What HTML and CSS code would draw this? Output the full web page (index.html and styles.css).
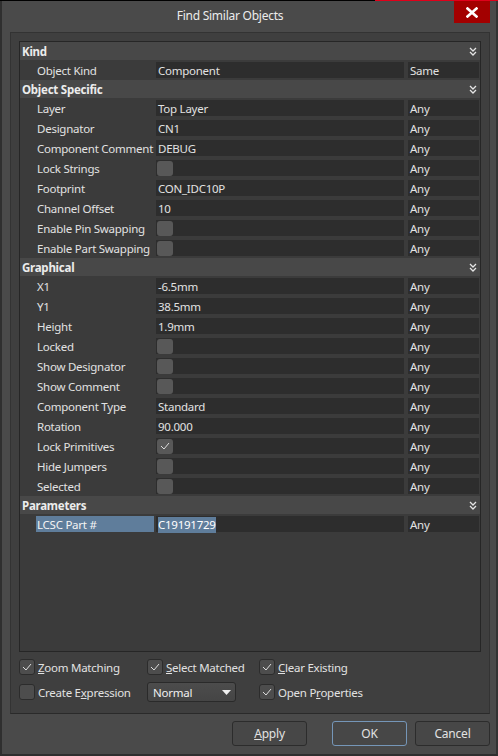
FILE: index.html
```html
<!DOCTYPE html>
<html lang="en">
<head>
    <meta charset="UTF-8">
    <title>Find Similar Objects</title>
    <link rel="stylesheet" href="styles.css">
</head>
<body>
    <div class="topline"></div>
    <div class="window">
        <div class="titlebar">
            <div class="title">Find Similar Objects</div>
            <div class="close">
                <svg width="12" height="11" viewBox="0 0 12 11"><path d="M1.5 1.5 L10.5 9.5 M10.5 1.5 L1.5 9.5" stroke="#fff" stroke-width="2.6" stroke-linecap="square"/></svg>
            </div>
        </div>

        <div class="panel">
            <div class="grid">
                <div class="group">
                    <span>Kind</span>
                    <svg class="chev" width="8" height="9" viewBox="0 0 8 9"><path d="M1 1 L4 4 L7 1 M1 5 L4 8 L7 5" stroke="#e6e6e6" stroke-width="1.3" fill="none"/></svg>
                </div>
                <div class="row"><div class="label">Object Kind</div><div class="value">Component</div><div class="mode">Same</div></div>

                <div class="group">
                    <span>Object Specific</span>
                    <svg class="chev" width="8" height="9" viewBox="0 0 8 9"><path d="M1 1 L4 4 L7 1 M1 5 L4 8 L7 5" stroke="#e6e6e6" stroke-width="1.3" fill="none"/></svg>
                </div>
                <div class="row"><div class="label">Layer</div><div class="value">Top Layer</div><div class="mode">Any</div></div>
                <div class="row"><div class="label">Designator</div><div class="value">CN1</div><div class="mode">Any</div></div>
                <div class="row"><div class="label">Component Comment</div><div class="value">DEBUG</div><div class="mode">Any</div></div>
                <div class="row"><div class="label">Lock Strings</div><div class="value"><span class="box"></span></div><div class="mode">Any</div></div>
                <div class="row"><div class="label">Footprint</div><div class="value">CON_IDC10P</div><div class="mode">Any</div></div>
                <div class="row"><div class="label">Channel Offset</div><div class="value">10</div><div class="mode">Any</div></div>
                <div class="row"><div class="label">Enable Pin Swapping</div><div class="value"><span class="box"></span></div><div class="mode">Any</div></div>
                <div class="row"><div class="label">Enable Part Swapping</div><div class="value"><span class="box"></span></div><div class="mode">Any</div></div>

                <div class="group">
                    <span>Graphical</span>
                    <svg class="chev" width="8" height="9" viewBox="0 0 8 9"><path d="M1 1 L4 4 L7 1 M1 5 L4 8 L7 5" stroke="#e6e6e6" stroke-width="1.3" fill="none"/></svg>
                </div>
                <div class="row"><div class="label">X1</div><div class="value">-6.5mm</div><div class="mode">Any</div></div>
                <div class="row"><div class="label">Y1</div><div class="value">38.5mm</div><div class="mode">Any</div></div>
                <div class="row"><div class="label">Height</div><div class="value">1.9mm</div><div class="mode">Any</div></div>
                <div class="row"><div class="label">Locked</div><div class="value"><span class="box"></span></div><div class="mode">Any</div></div>
                <div class="row"><div class="label">Show Designator</div><div class="value"><span class="box"></span></div><div class="mode">Any</div></div>
                <div class="row"><div class="label">Show Comment</div><div class="value"><span class="box"></span></div><div class="mode">Any</div></div>
                <div class="row"><div class="label">Component Type</div><div class="value">Standard</div><div class="mode">Any</div></div>
                <div class="row"><div class="label">Rotation</div><div class="value">90.000</div><div class="mode">Any</div></div>
                <div class="row"><div class="label">Lock Primitives</div><div class="value"><span class="box"><svg width="10" height="8" viewBox="0 0 10 8"><path d="M1 4 L4 7 L9 1" stroke="#dcdcdc" stroke-width="1" fill="none"/></svg></span></div><div class="mode">Any</div></div>
                <div class="row"><div class="label">Hide Jumpers</div><div class="value"><span class="box"></span></div><div class="mode">Any</div></div>
                <div class="row"><div class="label">Selected</div><div class="value"><span class="box"></span></div><div class="mode">Any</div></div>

                <div class="group">
                    <span>Parameters</span>
                    <svg class="chev" width="8" height="9" viewBox="0 0 8 9"><path d="M1 1 L4 4 L7 1 M1 5 L4 8 L7 5" stroke="#e6e6e6" stroke-width="1.3" fill="none"/></svg>
                </div>
                <div class="row">
                    <div class="label"><span class="picked">LCSC Part #</span></div>
                    <div class="value"><span class="sel">C19191729</span></div>
                    <div class="mode">Any</div>
                </div>
            </div>

            <div class="options">
                <div class="optrow">
                    <label class="opt w1"><span class="cb"><svg width="10" height="8" viewBox="0 0 10 8"><path d="M1 4 L4 7 L9 1" stroke="#dcdcdc" stroke-width="1" fill="none"/></svg></span><span><u>Z</u>oom Matching</span></label>
                    <label class="opt w2"><span class="cb"><svg width="10" height="8" viewBox="0 0 10 8"><path d="M1 4 L4 7 L9 1" stroke="#dcdcdc" stroke-width="1" fill="none"/></svg></span><span><u>S</u>elect Matched</span></label>
                    <label class="opt"><span class="cb"><svg width="10" height="8" viewBox="0 0 10 8"><path d="M1 4 L4 7 L9 1" stroke="#dcdcdc" stroke-width="1" fill="none"/></svg></span><span><u>C</u>lear Existing</span></label>
                </div>
                <div class="optrow">
                    <label class="opt w1"><span class="cb"></span><span>Create E<u>x</u>pression</span></label>
                    <div class="w2">
                        <div class="combo">
                            <span>Normal</span>
                            <svg width="9" height="5" viewBox="0 0 9 5"><path d="M0 0 L9 0 L4.5 5 Z" fill="#f0f0f0"/></svg>
                        </div>
                    </div>
                    <label class="opt"><span class="cb"><svg width="10" height="8" viewBox="0 0 10 8"><path d="M1 4 L4 7 L9 1" stroke="#dcdcdc" stroke-width="1" fill="none"/></svg></span><span>Open P<u>r</u>operties</span></label>
                </div>
            </div>
        </div>

        <div class="buttons">
            <button><u>A</u>pply</button>
            <button class="default">OK</button>
            <button>Cancel</button>
        </div>
    </div>
</body>
</html>
```

FILE: styles.css
```css
body {
    margin: 0;
    background-color: #000;
    font-family: "Noto Sans", "Open Sans", sans-serif;
    font-size: 11.5px;
    letter-spacing: -0.25px;
    color: #e2e2e2;
}
.topline {
    height: 1px;
    background:
        linear-gradient(to right, transparent 375px, #e0001a 375px),
        #000;
}
.window {
    width: 498px;
    height: 755px;
    box-sizing: border-box;
    background-color: #4a4a4a;
    border-left: 2px solid #2f2f2f;
    border-right: 2px solid #333;
    border-bottom: 2px solid #2f2f2f;
}
.titlebar {
    display: flex;
    height: 31px;
}
.title {
    flex: 1;
    text-align: center;
    line-height: 30px;
    padding-left: 4px;
    font-size: 12px;
    color: #ececec;
}
.close {
    width: 36px;
    height: 22px;
    margin-right: 6px;
    background-color: #a30000;
    display: flex;
    align-items: center;
    justify-content: center;
}
.panel {
    margin: 0 6px 0 8px;
    height: 682px;
    box-sizing: border-box;
    background-color: #3f3f3f;
    border: 1px solid #333;
    border-bottom-color: #2a2a2a;
    padding: 8px 8px 0 8px;
}
.grid {
    height: 611px;
    box-sizing: border-box;
    border: 1px solid #262626;
    background-color: #3b3b3b;
}
.group {
    display: flex;
    align-items: center;
    justify-content: space-between;
    height: 18px;
    padding: 0 3px 0 2px;
    background-color: #484848;
    font-weight: bold;
    color: #ececec;
}
.chev {
    margin-top: 1px;
}
.row {
    display: flex;
    height: 20px;
    align-items: center;
}
.label,
.value,
.mode {
    height: 16px;
    line-height: 16px;
    box-sizing: border-box;
    padding-top: 1px;
}
.label {
    width: 136px;
    padding-left: 17px;
    white-space: nowrap;
}
.picked {
    display: block;
    width: 118px;
    height: 16px;
    margin: -1px 0 0 -1px;
    box-sizing: border-box;
    padding: 1px 0 0 1px;
    background-color: #5f7d9b;
    color: #f4f4f4;
}
.value {
    width: 248px;
    padding-left: 2px;
    background-color: #2d2d2d;
    display: flex;
    align-items: center;
}
.mode {
    width: 71px;
    margin-left: 4px;
    padding-left: 2px;
    background-color: #2d2d2d;
}
.sel {
    background-color: #5f7d9b;
    color: #fff;
}
.box {
    width: 16px;
    height: 15px;
    margin: -1px 0 0 -1px;
    border-radius: 3px;
    background-color: #585858;
    display: flex;
    align-items: center;
    justify-content: center;
}
.options {
    padding-top: 5px;
    display: flex;
    flex-direction: column;
    gap: 5px;
}
.optrow {
    display: flex;
    height: 20px;
    align-items: center;
}
.opt {
    display: flex;
    align-items: center;
    gap: 3px;
}
.w1 {
    width: 128px;
}
.w2 {
    width: 112px;
}
.cb {
    width: 14px;
    height: 14px;
    border: 1px solid #2c2c2c;
    border-radius: 3px;
    background-color: #4d4d4d;
    display: flex;
    align-items: center;
    justify-content: center;
}
.combo {
    width: 89px;
    height: 20px;
    box-sizing: border-box;
    border: 1px solid #2a2a2a;
    border-radius: 3px;
    background: linear-gradient(#4c4c4c, #454545);
    display: flex;
    align-items: center;
    justify-content: space-between;
    padding: 0 4px 0 5px;
    color: #f0f0f0;
}
.buttons {
    display: flex;
    justify-content: flex-end;
    gap: 8px;
    padding: 7px 6px 0 0;
}
button {
    width: 75px;
    height: 25px;
    font-family: inherit;
    font-size: 12px;
    letter-spacing: -0.2px;
    color: #e2e2e2;
    background-color: #474747;
    border: 1px solid #2c2c2c;
    border-radius: 3px;
}
button.default {
    border-color: #7596b8;
    margin-left: 17px;
}
```
